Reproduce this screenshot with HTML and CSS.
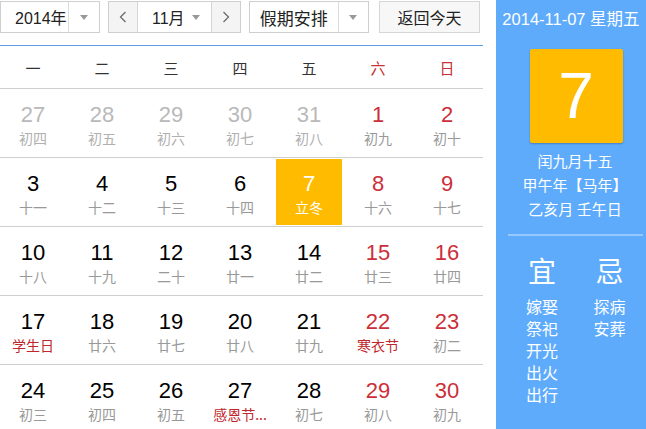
FILE: index.html
```html
<!DOCTYPE html>
<html lang="zh-CN">
<head>
<meta charset="utf-8">
<title>万年历</title>
<link rel="stylesheet" href="styles.css">
</head>
<body>
<div class="page">
  <div class="main">
    <div class="toolbar">
      <div class="select year">
        <span class="sel-text">2014年</span>
        <span class="sel-arrow"><i class="tri"></i></span>
      </div>
      <div class="month-group">
        <span class="nav-btn"><svg width="8" height="12" viewBox="0 0 8 12"><polyline points="6.5,1 1.5,6 6.5,11" fill="none" stroke="#666" stroke-width="1.2"/></svg></span>
        <span class="month-text">11月<i class="tri"></i></span>
        <span class="nav-btn"><svg width="8" height="12" viewBox="0 0 8 12"><polyline points="1.5,1 6.5,6 1.5,11" fill="none" stroke="#666" stroke-width="1.2"/></svg></span>
      </div>
      <div class="select holiday">
        <span class="sel-text">假期安排</span>
        <span class="sel-arrow"><i class="tri"></i></span>
      </div>
      <div class="today-btn">返回今天</div>
    </div>

    <div class="week-head">
      <span>一</span><span>二</span><span>三</span><span>四</span><span>五</span><span class="red">六</span><span class="red">日</span>
    </div>

    <div class="grid">
      <div class="row">
        <div class="cell other"><div class="in"><b>27</b><em>初四</em></div></div>
        <div class="cell other"><div class="in"><b>28</b><em>初五</em></div></div>
        <div class="cell other"><div class="in"><b>29</b><em>初六</em></div></div>
        <div class="cell other"><div class="in"><b>30</b><em>初七</em></div></div>
        <div class="cell other"><div class="in"><b>31</b><em>初八</em></div></div>
        <div class="cell wknd"><div class="in"><b>1</b><em>初九</em></div></div>
        <div class="cell wknd"><div class="in"><b>2</b><em>初十</em></div></div>
      </div>
      <div class="row">
        <div class="cell"><div class="in"><b>3</b><em>十一</em></div></div>
        <div class="cell"><div class="in"><b>4</b><em>十二</em></div></div>
        <div class="cell"><div class="in"><b>5</b><em>十三</em></div></div>
        <div class="cell"><div class="in"><b>6</b><em>十四</em></div></div>
        <div class="cell today"><div class="in"><b>7</b><em>立冬</em></div></div>
        <div class="cell wknd"><div class="in"><b>8</b><em>十六</em></div></div>
        <div class="cell wknd"><div class="in"><b>9</b><em>十七</em></div></div>
      </div>
      <div class="row">
        <div class="cell"><div class="in"><b>10</b><em>十八</em></div></div>
        <div class="cell"><div class="in"><b>11</b><em>十九</em></div></div>
        <div class="cell"><div class="in"><b>12</b><em>二十</em></div></div>
        <div class="cell"><div class="in"><b>13</b><em>廿一</em></div></div>
        <div class="cell"><div class="in"><b>14</b><em>廿二</em></div></div>
        <div class="cell wknd"><div class="in"><b>15</b><em>廿三</em></div></div>
        <div class="cell wknd"><div class="in"><b>16</b><em>廿四</em></div></div>
      </div>
      <div class="row">
        <div class="cell"><div class="in"><b>17</b><em class="fest">学生日</em></div></div>
        <div class="cell"><div class="in"><b>18</b><em>廿六</em></div></div>
        <div class="cell"><div class="in"><b>19</b><em>廿七</em></div></div>
        <div class="cell"><div class="in"><b>20</b><em>廿八</em></div></div>
        <div class="cell"><div class="in"><b>21</b><em>廿九</em></div></div>
        <div class="cell wknd"><div class="in"><b>22</b><em class="fest">寒衣节</em></div></div>
        <div class="cell wknd"><div class="in"><b>23</b><em>初二</em></div></div>
      </div>
      <div class="row">
        <div class="cell"><div class="in"><b>24</b><em>初三</em></div></div>
        <div class="cell"><div class="in"><b>25</b><em>初四</em></div></div>
        <div class="cell"><div class="in"><b>26</b><em>初五</em></div></div>
        <div class="cell"><div class="in"><b>27</b><em class="fest">感恩节...</em></div></div>
        <div class="cell"><div class="in"><b>28</b><em>初七</em></div></div>
        <div class="cell wknd"><div class="in"><b>29</b><em>初八</em></div></div>
        <div class="cell wknd"><div class="in"><b>30</b><em>初九</em></div></div>
      </div>
    </div>
  </div>

  <div class="side">
    <div class="side-date">2014-11-07 星期五</div>
    <div class="big-day">7</div>
    <div class="lunar">
      <div>闰九月十五</div>
      <div>甲午年【马年】</div>
      <div>乙亥月 壬午日</div>
    </div>
    <div class="yiji">
      <div class="col">
        <div class="yj-title">宜</div>
        <ul>
          <li>嫁娶</li><li>祭祀</li><li>开光</li><li>出火</li><li>出行</li>
        </ul>
      </div>
      <div class="col">
        <div class="yj-title">忌</div>
        <ul>
          <li>探病</li><li>安葬</li>
        </ul>
      </div>
    </div>
  </div>
</div>
</body>
</html>
```

FILE: styles.css
```css
html, body {
  margin: 0;
  padding: 0;
  background: #fff;
}
body {
  font-family: "Liberation Sans", Arial, "Noto Sans CJK SC", sans-serif;
  color: #333;
  overflow: hidden;
}
.page {
  display: flex;
  width: 646px;
  height: 429px;
  overflow: hidden;
}
.main {
  width: 483px;
  flex: none;
}

/* toolbar */
.toolbar {
  height: 44px;
  padding-top: 1px;
  display: flex;
  align-items: flex-start;
  border-bottom: 1px solid #5d9fdf;
}
.select {
  height: 30px;
  border: 1px solid #cfcfcf;
  display: flex;
  align-items: stretch;
  font-size: 16px;
  color: #222;
  box-sizing: content-box;
}
.sel-text {
  display: flex;
  align-items: center;
}
.sel-arrow {
  width: 30px;
  border-left: 1px solid #dcdcdc;
  display: flex;
  align-items: center;
  justify-content: center;
}
.tri {
  display: inline-block;
  width: 0;
  height: 0;
  border-left: 4px solid transparent;
  border-right: 4px solid transparent;
  border-top: 5px solid #999;
}
.year {
  width: 98px;
}
.year .sel-text {
  width: 54px;
  padding-left: 14px;
}
.month-group {
  margin-left: 8px;
  height: 30px;
  border: 1px solid #cfcfcf;
  display: flex;
  align-items: stretch;
  font-size: 16px;
  color: #222;
}
.nav-btn {
  width: 28px;
  background: #f4f4f4;
  display: flex;
  align-items: center;
  justify-content: center;
}
.month-text {
  width: 75px;
  border-left: 1px solid #d5d5d5;
  border-right: 1px solid #d5d5d5;
  display: flex;
  align-items: center;
  padding-left: 14px;
  box-sizing: border-box;
  gap: 7px;
}
.holiday {
  margin-left: 8px;
  width: 118px;
}
.holiday .sel-text {
  width: 89px;
  justify-content: center;
  font-size: 17px;
  font-family: "Noto Sans CJK SC", sans-serif;
}
.today-btn {
  margin-left: 10px;
  width: 99px;
  height: 30px;
  border: 1px solid #d6d6d6;
  background: #f7f7f7;
  display: flex;
  align-items: center;
  justify-content: center;
  font-size: 16px;
  color: #222;
  font-family: "Noto Sans CJK SC", sans-serif;
}

/* weekday header */
.week-head {
  display: grid;
  grid-template-columns: repeat(7, 69px);
  height: 42px;
  border-bottom: 1px solid #cfcfcf;
  font-family: "Noto Sans CJK SC", sans-serif;
  font-size: 15px;
  color: #333;
}
.week-head span {
  display: flex;
  align-items: center;
  justify-content: center;
  padding-right: 3px;
}
.week-head .red {
  color: #c8303a;
}

/* grid */
.row {
  display: grid;
  grid-template-columns: repeat(7, 69px);
  height: 68px;
  border-bottom: 1px solid #cfcfcf;
}
.cell .in {
  margin: 1px 3px 1px 0;
  height: 66px;
  display: flex;
  flex-direction: column;
  align-items: center;
  box-sizing: border-box;
  padding-top: 10.5px;
}
.cell b {
  font-weight: normal;
  font-size: 22px;
  line-height: 28px;
  color: #000;
  font-family: "Liberation Sans", Arial, sans-serif;
}
.cell em {
  font-style: normal;
  font-size: 14px;
  line-height: 18px;
  color: #999;
  font-family: "Noto Sans CJK SC", sans-serif;
  white-space: nowrap;
}
.cell.other b {
  color: #b9b9b9;
}
.cell.other em {
  color: #b0b0b0;
}
.cell.wknd b {
  color: #cc2f3a;
}
.cell em.fest {
  color: #c0272d;
}
.cell.today .in {
  background: #ffbb00;
}
.cell.today b,
.cell.today em {
  color: #fff;
}

/* side panel */
.side {
  margin-left: 13px;
  width: 150px;
  flex: none;
  background: #5eabfc;
  color: #fff;
  font-family: "Noto Sans CJK SC", sans-serif;
  display: flex;
  flex-direction: column;
  align-items: center;
}
.side-date {
  margin-top: 7px;
  line-height: 24px;
  font-size: 16.5px;
  font-family: "Liberation Sans", Arial, "Noto Sans CJK SC", sans-serif;
  white-space: nowrap;
}
.big-day {
  margin-top: 18px;
  margin-left: 10px;
  width: 93px;
  height: 94px;
  background: #ffbb00;
  border-radius: 2px;
  box-shadow: 0 1px 2px rgba(0, 0, 0, 0.25);
  display: flex;
  align-items: center;
  justify-content: center;
  font-family: "Liberation Sans", Arial, sans-serif;
  font-size: 64px;
  line-height: 1;
  color: #fff;
}
.lunar {
  margin-top: 6px;
  margin-left: 8px;
  font-size: 15px;
  line-height: 24px;
  text-align: center;
  white-space: nowrap;
}
.yiji {
  align-self: stretch;
  margin: 13px 3px 0 12px;
  border-top: 2px solid rgba(255, 255, 255, 0.35);
  display: grid;
  grid-template-columns: 68px 67px;
  padding-top: 16px;
}
.yiji .col {
  display: flex;
  flex-direction: column;
  align-items: center;
}
.yj-title {
  font-size: 28px;
  line-height: 36px;
}
.yiji ul {
  list-style: none;
  margin: 7px 0 0;
  padding: 0;
  font-size: 16px;
  line-height: 22px;
}
```
